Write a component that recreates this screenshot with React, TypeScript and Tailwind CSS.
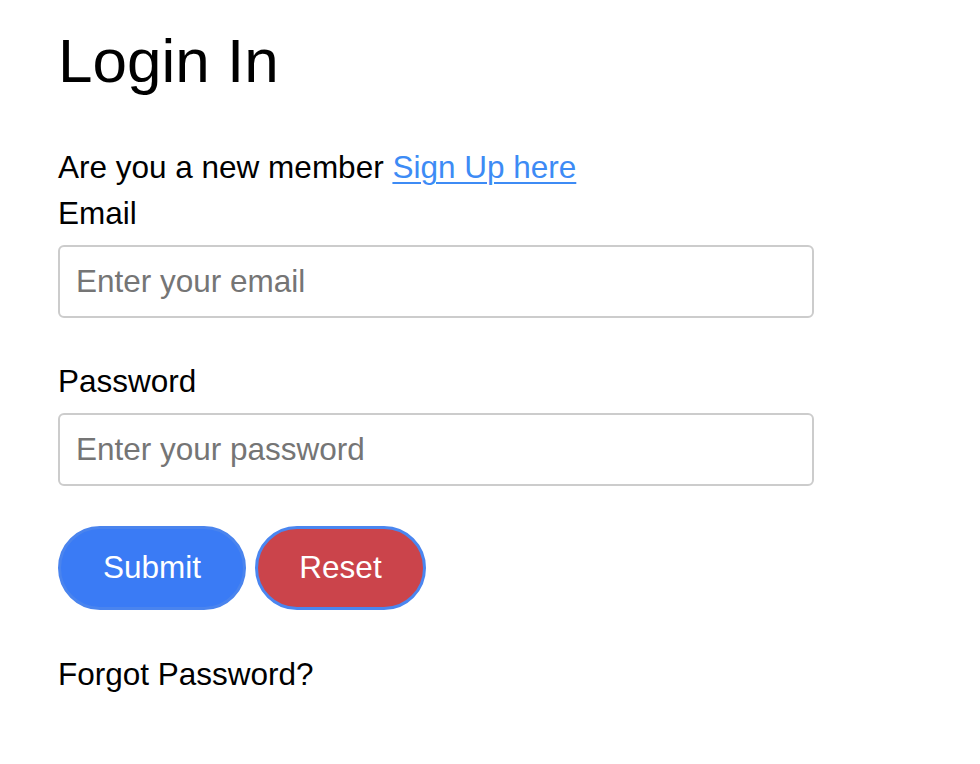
import React from "react";

export default function App() {
  return (
    <div
      className="min-h-[764px] w-[980px] bg-white pl-[58px] pt-[26px] text-black"
      style={{ fontFamily: '"Liberation Sans", Arial, Helvetica, sans-serif' }}
    >
      <h1 className="m-0 text-[62px] leading-[70px] font-normal">Login In</h1>
      <p className="mt-[48px] text-[31.5px] leading-[46px]">
        Are you a new member{" "}
        <a href="#" className="text-[#3d8bf5] underline underline-offset-[4px] decoration-[2px]">
          Sign Up here
        </a>
      </p>
      <label className="block text-[31.5px] leading-[46px]">Email</label>
      <input
        type="email"
        placeholder="Enter your email"
        className="mt-[9px] block h-[73px] w-[756px] rounded-[6px] border-2 border-[#cccccc] px-[16px] text-[31.5px] text-black placeholder:text-[#757575] outline-none"
      />
      <label className="mt-[40px] block text-[31.5px] leading-[46px]">Password</label>
      <input
        type="password"
        placeholder="Enter your password"
        className="mt-[9px] block h-[73px] w-[756px] rounded-[6px] border-2 border-[#cccccc] px-[16px] text-[31.5px] text-black placeholder:text-[#757575] outline-none"
      />
      <div className="mt-[40px] flex gap-[9px]">
        <button className="flex h-[84px] w-[188px] items-center justify-center rounded-full border-[3px] border-[#4a84ee] bg-[#3a7bf5] text-[31.5px] text-white">
          Submit
        </button>
        <button className="flex h-[84px] w-[171px] items-center justify-center rounded-full border-[3px] border-[#4a86f0] bg-[#cb444b] text-[31.5px] text-white">
          Reset
        </button>
      </div>
      <p className="mt-[41px] text-[31.5px] leading-[46px]">Forgot Password?</p>
    </div>
  );
}
